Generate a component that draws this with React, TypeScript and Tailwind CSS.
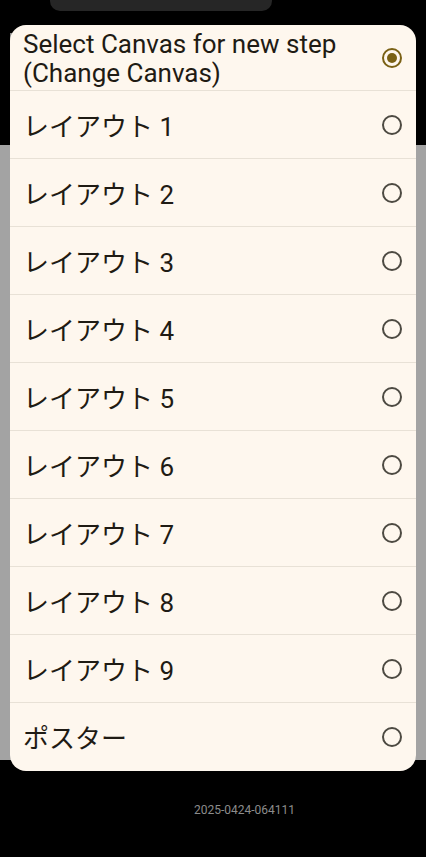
const options = [
  "レイアウト 1",
  "レイアウト 2",
  "レイアウト 3",
  "レイアウト 4",
  "レイアウト 5",
  "レイアウト 6",
  "レイアウト 7",
  "レイアウト 8",
  "レイアウト 9",
  "ポスター",
]

function Radio({ checked }: { checked?: boolean }) {
  if (checked) {
    return (
      <span className="flex h-[20px] w-[20px] items-center justify-center rounded-full border-2 border-[#7a6115]">
        <span className="h-[10px] w-[10px] rounded-full bg-[#7a6115]" />
      </span>
    )
  }
  return <span className="block h-[20px] w-[20px] rounded-full border-2 border-[#4d4a42]" />
}

export default function App() {
  return (
    <div
      className="relative flex h-[857px] w-[426px] flex-col overflow-hidden bg-black"
      style={{ fontFamily: 'Roboto, "Noto Sans CJK JP", sans-serif' }}
    >
      {/* camera cutout */}
      <div className="absolute left-[50px] top-0 h-[11px] w-[222px] rounded-b-[10px] bg-[#262626]" />
      {/* dimmed app behind dialog */}
      <div className="absolute left-0 top-[145px] h-[615px] w-full bg-[#a3a3a3]" />
      <div className="absolute left-[10px] top-[33px] h-[8px] w-[3px] bg-[#8a8a8a]" />

      <div className="relative mx-[10px] mt-[25px] flex flex-col overflow-hidden rounded-[16px] bg-[#fef7ee] text-[#1f1b14]">
        <div className="flex h-[66px] items-center justify-between border-b border-[#e8e1d6] pl-[13px] pr-[14px]">
          <span className="pt-[2px] text-[26px] leading-[29px]">
            Select Canvas for new step
            <br />
            (Change Canvas)
          </span>
          <Radio checked />
        </div>
        {options.map((o, i) => (
          <div
            key={o}
            className={
              "flex h-[68px] items-center justify-between pl-[13px] pr-[14px] " +
              (i < options.length - 1 ? "border-b border-[#e8e1d6]" : "")
            }
          >
            <span className="pt-[5px] text-[26px]">{o}</span>
            <Radio />
          </div>
        ))}
      </div>

      <div className="relative mt-[30px] pl-[194px] text-[12px] text-[#8c8c8c]">2025-0424-064111</div>
    </div>
  )
}
